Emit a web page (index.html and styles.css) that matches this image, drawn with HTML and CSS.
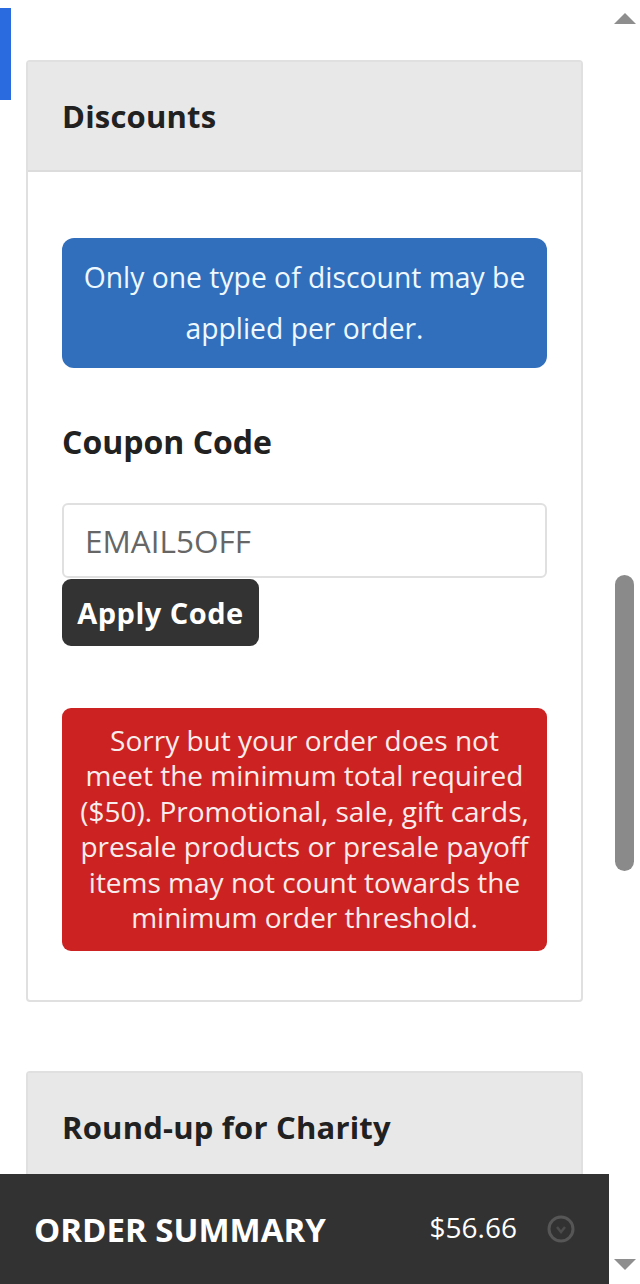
FILE: index.html
```html
<!DOCTYPE html>
<html>
<head>
  <title>Checkout</title>
  <link rel="stylesheet" href="styles.css">
</head>
<body>
  <div class="side-tab"></div>

  <div class="content">
    <div class="card">
      <div class="card-header">Discounts</div>
      <div class="card-body">
        <div class="alert-info">Only one type of discount may be applied per order.</div>
        <div class="field-label">Coupon Code</div>
        <input class="coupon-input" type="text" value="EMAIL5OFF">
        <button class="apply-btn">Apply Code</button>
        <div class="alert-error">Sorry but your order does not meet the minimum total required ($50). Promotional, sale, gift cards, presale products or presale payoff items may not count towards the minimum order threshold.</div>
      </div>
    </div>

    <div class="card">
      <div class="card-header">Round-up for Charity</div>
    </div>
  </div>

  <div class="order-bar">
    <span class="order-title">ORDER SUMMARY</span>
    <span class="order-total">$56.66</span>
    <svg class="order-icon" width="30" height="30" viewBox="0 0 30 30">
      <circle cx="15" cy="15" r="12" fill="none" stroke="#565656" stroke-width="3"/>
      <path d="M11 13l4 5 4-5" fill="none" stroke="#4c4c4c" stroke-width="2.5"/>
    </svg>
  </div>

  <div class="scrollbar">
    <div class="arrow-up"></div>
    <div class="scroll-track"><div class="scroll-thumb"></div></div>
    <div class="arrow-down"></div>
  </div>
</body>
</html>
```

FILE: styles.css
```css
body {
  margin: 0;
  height: 1284px;
  overflow: hidden;
  position: relative;
  background-color: #fff;
  font-family: "Open Sans", "Noto Sans", Arial, sans-serif;
  color: #212121;
}

.side-tab {
  position: absolute;
  left: 0;
  top: 8px;
  width: 11px;
  height: 92px;
  background-color: #2a6be0;
}

.content {
  width: 557px;
  margin-left: 26px;
  padding-top: 60px;
}

.card {
  border: 2px solid #e0e0e0;
  border-radius: 4px;
  margin-bottom: 69px;
  box-sizing: border-box;
}

.card-header {
  background-color: #e8e8e8;
  border-bottom: 2px solid #dcdcdc;
  height: 110px;
  box-sizing: border-box;
  padding: 32px 34px 0;
  font-size: 31px;
  line-height: 44px;
  font-weight: 700;
  letter-spacing: 0.2px;
}

.card-body {
  padding: 66px 34px 49px;
}

.alert-info {
  background-color: #316fbd;
  color: #eef8ff;
  border-radius: 12px;
  padding: 14px 16px 14px;
  font-size: 28.3px;
  line-height: 51px;
  text-align: center;
}

.field-label {
  margin-top: 53px;
  font-size: 32px;
  line-height: 42px;
  font-weight: 700;
}

.coupon-input {
  display: block;
  width: 100%;
  height: 75px;
  box-sizing: border-box;
  margin-top: 40px;
  padding: 0 21px;
  border: 2px solid #e0e0e0;
  border-radius: 6px;
  font-family: inherit;
  font-size: 31.5px;
  color: #666;
  background-color: #fff;
}

.apply-btn {
  display: block;
  width: 197px;
  height: 67px;
  border: none;
  border-radius: 9px;
  background-color: #333;
  color: #fff;
  font-family: inherit;
  font-size: 29px;
  font-weight: 700;
  letter-spacing: 0.5px;
  padding: 0;
  margin-top: 1px;
}

.alert-error {
  margin-top: 62px;
  background-color: #cc2222;
  color: #f8ecec;
  border-radius: 9px;
  padding: 15px 18px 16px;
  font-size: 28px;
  line-height: 35.4px;
  text-align: center;
}

.order-bar {
  position: absolute;
  left: 0;
  top: 1174px;
  width: 609px;
  height: 110px;
  box-sizing: border-box;
  background-color: #323232;
  color: #fff;
  display: flex;
  align-items: center;
  padding: 0 33px 0 34px;
}

.order-title {
  font-size: 33px;
  font-weight: 700;
  flex: 1;
}

.order-total {
  font-size: 28px;
  margin-right: 29px;
  margin-top: -4px;
}

.order-icon {
  display: block;
}

.scrollbar {
  position: absolute;
  right: 0;
  top: 0;
  width: 31px;
  height: 1284px;
  display: flex;
  flex-direction: column;
  align-items: center;
}

.arrow-up,
.arrow-down {
  width: 0;
  height: 0;
  border-left: 11px solid transparent;
  border-right: 11px solid transparent;
}

.arrow-up {
  border-bottom: 11px solid #8e8e8e;
  margin-top: 13px;
}

.arrow-down {
  border-top: 11px solid #8e8e8e;
  margin-bottom: 14px;
}

.scroll-track {
  flex: 1;
  width: 100%;
  position: relative;
}

.scroll-thumb {
  position: absolute;
  left: 6px;
  top: 551px;
  width: 19px;
  height: 296px;
  border-radius: 10px;
  background-color: #8a8a8a;
}
```
